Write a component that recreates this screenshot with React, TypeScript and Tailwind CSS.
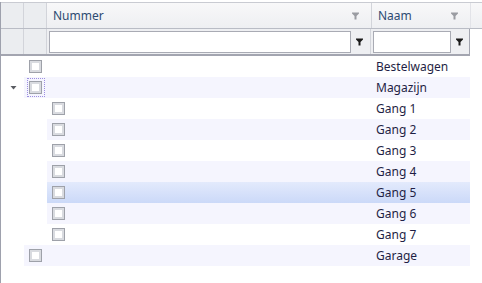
import React from 'react';

type Row = { name: string; level: 0 | 1; expanded?: boolean; focused?: boolean; selected?: boolean };

const rows: Row[] = [
  { name: 'Bestelwagen', level: 0 },
  { name: 'Magazijn', level: 0, expanded: true, focused: true },
  { name: 'Gang 1', level: 1 },
  { name: 'Gang 2', level: 1 },
  { name: 'Gang 3', level: 1 },
  { name: 'Gang 4', level: 1 },
  { name: 'Gang 5', level: 1, selected: true },
  { name: 'Gang 6', level: 1 },
  { name: 'Gang 7', level: 1 },
  { name: 'Garage', level: 0 },
];

const Funnel: React.FC<{ dark?: boolean }> = ({ dark }) => (
  <svg width="7" height="8" viewBox="0 0 7 8" className="block">
    <path d="M0 0.5 H7 V1.5 L4.5 4 V7.5 H2.5 V4 L0 1.5 Z" fill={dark ? '#1a1a1a' : '#9a9ca2'} />
  </svg>
);

const Checkbox: React.FC = () => (
  <div className="w-[13px] h-[13px] border border-[#9ea1a9] bg-[#d9dbe0] p-[2px]">
    <div className="w-full h-full bg-white" />
  </div>
);

const App: React.FC = () => {
  return (
    <div className="w-[482px] h-[283px] bg-white pt-[2px] text-[12px] overflow-hidden" style={{ fontFamily: '"Noto Sans", "Open Sans", sans-serif' }}>
      <div className="w-[482px] h-[281px] border-l border-[#9ea1ad] flex flex-col">
        {/* Header */}
        <div className="flex h-[27px] border-t border-[#c9cbd2] border-b border-b-[#b9bcc5] bg-gradient-to-b from-[#f8f8f9] to-[#eeeff2]">
          <div className="w-[23px] bg-[#ebedf0] border-r border-[#d2d4da]" />
          <div className="w-[23px] bg-[#ebedf0] border-r border-[#d2d4da]" />
          <div className="w-[325px] flex items-center justify-between pl-[6px] pr-[12px] border-r border-[#d2d4da]">
            <span className="text-[#2e4b72]">Nummer</span>
            <Funnel />
          </div>
          <div className="w-[99px] flex items-center justify-between pl-[6px] pr-[12px] border-r border-[#e2e3e8]">
            <span className="text-[#2e4b72]">Naam</span>
            <Funnel />
          </div>
          <div className="flex-1" />
        </div>
        {/* Filter row */}
        <div className="flex h-[27px]">
          <div className="w-[469px] flex border-b-2 border-[#a3a5b0]">
            <div className="w-[23px] bg-[#ebedf0] border-r border-[#d2d4da]" />
            <div className="w-[23px] bg-[#ebedf0] border-r border-[#d2d4da]" />
            <div className="flex-1 flex items-center pl-[2px] pr-[7px] bg-[#eeeff2] border-r border-[#d2d4da]">
              <div className="flex-1 h-[22px] bg-white border border-[#a9abb4]" />
              <div className="ml-[5px]"><Funnel dark /></div>
            </div>
            <div className="w-[99px] flex items-center pl-[2px] pr-[6px] bg-[#eeeff2] border-r border-[#a3a5b0]">
              <div className="flex-1 h-[22px] bg-white border border-[#a9abb4]" />
              <div className="ml-[5px]"><Funnel dark /></div>
            </div>
          </div>
        </div>
        {/* Rows */}
        {rows.map((r, i) => (
          <div key={r.name} className="flex h-[21px] w-[469px]">
            <div className="w-[23px] flex items-center justify-center pl-[2px]">
              {r.expanded && (
                <svg width="7" height="4" viewBox="0 0 7 4" className="block">
                  <path d="M0.5 0 H6.5 L3.5 3.5 Z" fill="#5a5c62" />
                </svg>
              )}
            </div>
            {r.level === 1 && <div className="w-[23px]" />}
            <div
              className={
                'flex-1 flex items-center ' +
                (r.selected
                  ? 'bg-gradient-to-b from-[#e3eafc] to-[#cbd9f8]'
                  : i % 2 === 1
                  ? 'bg-[#f5f5fe]'
                  : 'bg-white')
              }
            >
              <div className="w-[23px] h-full flex items-center justify-center">
                {r.focused ? (
                  <div className="w-[18px] h-[19px] border border-dotted border-[#9d8fe0] flex items-center justify-center">
                    <Checkbox />
                  </div>
                ) : (
                  <Checkbox />
                )}
              </div>
              <div className="flex-1" />
              <div className="w-[99px] pl-[5px] text-[#1f1f45] leading-none">{r.name}</div>
            </div>
          </div>
        ))}
      </div>
    </div>
  );
};

export default App;
